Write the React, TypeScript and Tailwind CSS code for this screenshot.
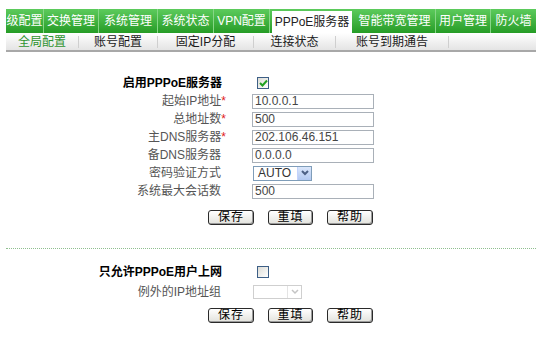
import React from "react";

const F = "font-['Liberation_Sans','Noto_Sans_CJK_SC',sans-serif]";

const topTabs = [
  { t: "级配置", w: 37 },
  { t: "交换管理", w: 55 },
  { t: "系统管理", w: 59 },
  { t: "系统状态", w: 56 },
  { t: "VPN配置", w: 56 },
  { t: "PPPoE服务器", w: 85, active: true },
  { t: "智能带宽管理", w: 81 },
  { t: "用户管理", w: 55 },
  { t: "防火墙", w: 46 },
];

const subTabs = [
  { t: "全局配置", w: 72, active: true },
  { t: "账号配置", w: 78 },
  { t: "固定IP分配", w: 95 },
  { t: "连接状态", w: 81 },
  { t: "账号到期通告", w: 112 },
];

function Checkbox({ checked }: { checked?: boolean }) {
  return (
    <div className="w-[12px] h-[12px] border border-[#3d5f86] bg-gradient-to-br from-[#dcdcd6] to-[#ffffff] flex items-center justify-center">
      {checked && (
        <svg width="9" height="8" viewBox="0 0 9 8">
          <path d="M1 4 L3.5 6.5 L8 1.5" stroke="#21a121" strokeWidth="2" fill="none" />
        </svg>
      )}
    </div>
  );
}

function TextInput({ v }: { v: string }) {
  return (
    <div className="w-[122px] h-[15px] border border-[#a9b0b8] bg-white flex items-center pl-[2px] text-[12px] leading-[13px] text-[#454545]">
      {v}
    </div>
  );
}

function Btn({ t, w }: { t: string; w: number }) {
  return (
    <div
      style={{ width: w }}
      className="h-[15px] border border-[#2a2a2a] rounded-[3px] bg-gradient-to-b from-[#ffffff] to-[#e2e2dc] flex items-center justify-center text-[12px] leading-[13px] text-black tracking-[1px] shadow-[inset_-1px_-1px_0_#9a9a9a]"
    >
      {t}
    </div>
  );
}

function Label({ children, star, bold }: { children: React.ReactNode; star?: boolean; bold?: boolean }) {
  return (
    <div
      className={
        "text-right whitespace-nowrap " +
        (bold ? "font-bold text-black pr-[4px]" : "text-[#555555] ") +
        (!bold && !star ? "pr-[5px]" : "")
      }
    >
      {children}
      {star && <span className="text-[#e02020]">*</span>}
    </div>
  );
}

export default function App() {
  return (
    <div className={"w-[546px] h-[346px] bg-white overflow-hidden text-[12px] " + F}>
      <div className="h-[9px]" />
      {/* green main tabs */}
      <div className="ml-[6px] w-[530px] h-[24px] flex bg-gradient-to-b from-[#5ccb5c] to-[#259c25]">
        {topTabs.map((tab, i) =>
          tab.active ? (
            <div key={i} style={{ width: tab.w }} className="h-full px-[2px] pt-[2px] border-l border-[#86d686]">
              <div className="h-full bg-white flex items-center justify-center text-[#222] whitespace-nowrap">
                {tab.t}
              </div>
            </div>
          ) : (
            <div
              key={i}
              style={{ width: tab.w }}
              className={
                "h-full flex items-center justify-center text-white whitespace-nowrap " +
                (i > 0 && !topTabs[i - 1].active ? "border-l border-[#86d686]" : "")
              }
            >
              {tab.t}
            </div>
          )
        )}
      </div>
      {/* sub tabs */}
      <div className="ml-[6px] w-[530px] h-[19px] flex items-center bg-gradient-to-b from-[#ffffff] to-[#e4e4e4] border-b-2 border-[#a8a8a8]">
        {subTabs.map((s, i) => (
          <React.Fragment key={i}>
            <div
              style={{ width: s.w }}
              className={
                "h-full flex items-center justify-center whitespace-nowrap " +
                (s.active ? "text-[#2f932f]" : "text-[#1a1a1a]")
              }
            >
              {s.t}
            </div>
            <div className="w-px h-[12px] bg-[#cfcfcf]" />
          </React.Fragment>
        ))}
      </div>

      {/* form section 1 */}
      <div className="mt-[22px] grid grid-cols-[226px_auto] gap-x-[26px] auto-rows-[18px] items-center leading-[14px]">
        <Label bold>启用PPPoE服务器</Label>
        <div className="pl-[5px]">
          <Checkbox checked />
        </div>
        <Label star>起始IP地址</Label>
        <TextInput v="10.0.0.1" />
        <Label star>总地址数</Label>
        <TextInput v="500" />
        <Label star>主DNS服务器</Label>
        <TextInput v="202.106.46.151" />
        <Label>备DNS服务器</Label>
        <TextInput v="0.0.0.0" />
        <Label>密码验证方式</Label>
        <div className="pl-[1px]">
          <div className="w-[59px] h-[15px] border border-[#7f9db9] bg-white flex items-center">
            <span className="flex-1 pl-[4px] text-[12px] leading-[13px] text-[#333]">AUTO</span>
            <div className="w-[14px] h-[13px] bg-gradient-to-b from-[#dbe7fb] to-[#b3c9f1] border-l border-[#c3d3fd] flex items-center justify-center">
              <svg width="8" height="6" viewBox="0 0 8 6">
                <path d="M1 1 L4 4 L7 1" stroke="#4d6185" strokeWidth="2" fill="none" />
              </svg>
            </div>
          </div>
        </div>
        <Label>系统最大会话数</Label>
        <TextInput v="500" />
      </div>
      <div className="mt-[10px] ml-[208px] flex gap-[14px]">
        <Btn t="保存" w={46} />
        <Btn t="重填" w={45} />
        <Btn t="帮助" w={46} />
      </div>

      <div className="mt-[23px] ml-[6px] w-[530px] border-t border-dotted border-[#8fbf8f]" />

      {/* form section 2 */}
      <div className="mt-[13px] grid grid-cols-[226px_auto] gap-x-[26px] auto-rows-[20px] items-center leading-[14px]">
        <Label bold>只允许PPPoE用户上网</Label>
        <div className="pl-[5px]">
          <Checkbox />
        </div>
        <Label>例外的IP地址组</Label>
        <div className="pl-[1px]">
          <div className="w-[49px] h-[14px] border border-[#cfcfcf] bg-white flex items-center justify-end">
            <div className="w-[14px] h-[12px] flex items-center justify-center border-l border-[#e4e4e4]">
              <svg width="8" height="6" viewBox="0 0 8 6">
                <path d="M1 1 L4 4 L7 1" stroke="#c4c4c4" strokeWidth="1.5" fill="none" />
              </svg>
            </div>
          </div>
        </div>
      </div>
      <div className="mt-[6px] ml-[208px] flex gap-[14px]">
        <Btn t="保存" w={46} />
        <Btn t="重填" w={45} />
        <Btn t="帮助" w={46} />
      </div>
    </div>
  );
}
